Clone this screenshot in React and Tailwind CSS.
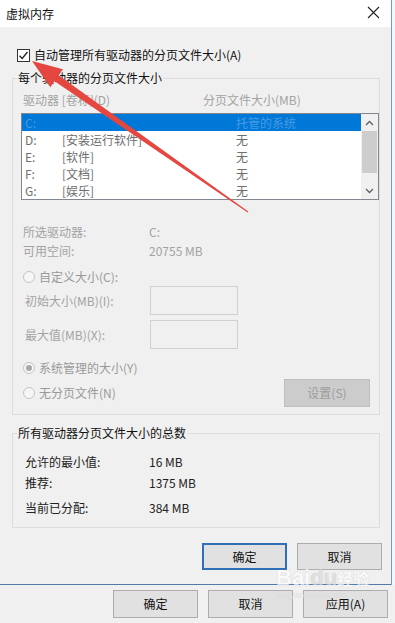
import React from "react";

const F = { fontFamily: '"Noto Sans CJK SC", "Noto Sans", sans-serif' };

function Radio({ checked }) {
  return (
    <span className="w-[12px] h-[12px] rounded-full border border-[#c4c4c4] bg-[#f6f6f6] flex items-center justify-center shrink-0">
      {checked && <span className="w-[6px] h-[6px] rounded-full bg-[#a8a8a8]" />}
    </span>
  );
}

function Btn({ children, primary, disabled, className = "" }) {
  return (
    <div
      className={
        "flex items-center justify-center text-[12px] leading-[14px] " +
        (primary
          ? "border-2 border-[#2f6fb7] bg-[#e1e1e1] text-[#111] "
          : disabled
          ? "border border-[#bfbfbf] bg-[#cccccc] text-[#9c9c9c] "
          : "border border-[#adadad] bg-[#e1e1e1] text-[#111] ") +
        className
      }
    >
      {children}
    </div>
  );
}

const rows = [
  ["D:", "[安装运行软件]", "无"],
  ["E:", "[软件]", "无"],
  ["F:", "[文档]", "无"],
  ["G:", "[娱乐]", "无"],
];

export default function App() {
  return (
    <div className="w-[395px] h-[623px] bg-[#f0f0f0] relative overflow-hidden text-[12px] leading-[14px] text-[#111]" style={F}>
      <div className="flex">
        <div className="w-[392px] border-r border-[#6d9ccf] shrink-0">
          {/* Title bar */}
          <div className="h-[27px] bg-white flex items-center justify-between pl-[6px] pr-[11px]">
            <span className="text-[12px] leading-[14px] text-[#111]">虚拟内存</span>
            <svg width="13" height="13" viewBox="0 0 13 13" className="mt-[-2px]">
              <path d="M1 1 L12 12 M12 1 L1 12" stroke="#222" strokeWidth="1.1" fill="none" />
            </svg>
          </div>
          {/* Body */}
          <div className="h-[558px] bg-[#f0f0f0] border-b border-[#4f7bab] flex flex-col">
            <div className="mt-[21px] ml-[17px] flex items-center h-[14px]">
              <span className="w-[13px] h-[13px] border border-[#333] bg-white flex items-center justify-center shrink-0">
                <svg width="11" height="11" viewBox="0 0 11 11">
                  <path d="M1.5 5.8 L4.2 8.5 L9.5 2" stroke="#222" strokeWidth="1.3" fill="none" />
                </svg>
              </span>
              <span className="ml-[4px]">自动管理所有驱动器的分页文件大小(A)</span>
            </div>

            {/* Group 1 */}
            <fieldset className="mt-[9px] ml-[12px] w-[368px] border border-[#dcdcdc] m-0 p-0 pb-[7px]">
              <legend className="ml-[4px] px-[1px] text-[12px] leading-[14px] text-[#111]">每个驱动器的分页文件大小</legend>
              <div className="mt-[8px] flex h-[14px] text-[#a3a3a3]">
                <span className="ml-[10px] w-[180px]">驱动器 [卷标](D)</span>
                <span>分页文件大小(MB)</span>
              </div>
              <div className="mt-[6px] ml-[8px] w-[358px] h-[87px] border border-[#828790] bg-white flex">
                <div className="flex-1 flex flex-col">
                  <div className="h-[17px] bg-[#0078d7] flex items-center text-[#4a9ae2]">
                    <span className="ml-[3px] w-[211px]">C:</span>
                    <span>托管的系统</span>
                  </div>
                  {rows.map((r) => (
                    <div key={r[0]} className="h-[17px] flex items-center text-[#6e6e6e]">
                      <span className="ml-[3px] w-[37px]">{r[0]}</span>
                      <span className="w-[174px]">{r[1]}</span>
                      <span>{r[2]}</span>
                    </div>
                  ))}
                </div>
                <div className="w-[17px] bg-[#f0f0f0] flex flex-col items-center">
                  <div className="h-[17px] flex items-center justify-center">
                    <svg width="9" height="6" viewBox="0 0 9 6"><path d="M1 5 L4.5 1.5 L8 5" stroke="#606060" strokeWidth="1.3" fill="none" /></svg>
                  </div>
                  <div className="w-[15px] h-[42px] bg-[#cdcdcd]" />
                  <div className="flex-1" />
                  <div className="h-[17px] flex items-center justify-center">
                    <svg width="9" height="6" viewBox="0 0 9 6"><path d="M1 1 L4.5 4.5 L8 1" stroke="#606060" strokeWidth="1.3" fill="none" /></svg>
                  </div>
                </div>
              </div>

              <div className="mt-[25px] flex h-[14px] text-[#a3a3a3]">
                <span className="ml-[10px] w-[126px]">所选驱动器:</span>
                <span>C:</span>
              </div>
              <div className="mt-[5px] flex h-[14px] text-[#a3a3a3]">
                <span className="ml-[10px] w-[126px]">可用空间:</span>
                <span>20755 MB</span>
              </div>

              <div className="mt-[12px] ml-[10px] flex items-center h-[14px] text-[#9a9a9a]">
                <Radio />
                <span className="ml-[4px]">自定义大小(C):</span>
              </div>
              <div className="mt-[2px] flex items-center h-[29px] text-[#a3a3a3]">
                <span className="ml-[12px] w-[125px]">初始大小(MB)(I):</span>
                <div className="w-[88px] h-[29px] border border-[#d0d0d0] bg-[#f0f0f0]" />
              </div>
              <div className="mt-[5px] flex items-center h-[29px] text-[#a3a3a3]">
                <span className="ml-[12px] w-[125px]">最大值(MB)(X):</span>
                <div className="w-[88px] h-[29px] border border-[#d0d0d0] bg-[#f0f0f0]" />
              </div>
              <div className="mt-[12px] ml-[10px] flex items-center h-[14px] text-[#9a9a9a]">
                <Radio checked />
                <span className="ml-[4px]">系统管理的大小(Y)</span>
              </div>
              <div className="mt-[4px] ml-[10px] flex items-center h-[28px] text-[#9a9a9a]">
                <Radio />
                <span className="ml-[4px] w-[245px]">无分页文件(N)</span>
                <Btn disabled className="w-[86px] h-[28px]">设置(S)</Btn>
              </div>
            </fieldset>

            {/* Group 2 */}
            <fieldset className="mt-[11px] ml-[12px] w-[368px] border border-[#dcdcdc] m-0 p-0 pb-[12px]">
              <legend className="ml-[4px] px-[1px] text-[12px] leading-[14px] text-[#111]">所有驱动器分页文件大小的总数</legend>
              <div className="mt-[15px] flex h-[14px] text-[#222]">
                <span className="ml-[12px] w-[124px]">允许的最小值:</span>
                <span>16 MB</span>
              </div>
              <div className="mt-[7px] flex h-[14px] text-[#222]">
                <span className="ml-[12px] w-[124px]">推荐:</span>
                <span>1375 MB</span>
              </div>
              <div className="mt-[11px] flex h-[14px] text-[#222]">
                <span className="ml-[12px] w-[124px]">当前已分配:</span>
                <span>384 MB</span>
              </div>
            </fieldset>

            <div className="mt-[15px] flex justify-end gap-[10px] pr-[9px]">
              <Btn primary className="w-[85px] h-[27px]">确定</Btn>
              <Btn className="w-[85px] h-[27px]">取消</Btn>
            </div>
          </div>
        </div>
        <div className="flex-1 bg-[#f4f7fa]" />
      </div>

      {/* Outer buttons */}
      <div className="mt-[5px] flex gap-[10px] pl-[113px]">
        <Btn className="w-[85px] h-[28px]">确定</Btn>
        <Btn className="w-[85px] h-[28px]">取消</Btn>
        <Btn className="w-[85px] h-[28px]">应用(A)</Btn>
      </div>

      {/* Watermark */}
      <div className="absolute left-[276px] top-[566px] pointer-events-none flex flex-col items-start opacity-70">
        <span className="text-[22px] leading-[24px] font-bold text-white" style={{ fontFamily: '"Liberation Sans", sans-serif', textShadow: "0 0 1px #b8b8b8" }}>
          Bai<span className="text-[#d8d8d8]">du</span><span className="text-[16px]" style={F}>经验</span>
        </span>
        <span className="text-[9px] leading-[10px] text-[#dcdcdc]" style={{ fontFamily: '"Liberation Sans", sans-serif' }}>jingyan.baidu.com</span>
      </div>

      {/* Red annotation arrow */}
      <svg className="absolute left-0 top-0 pointer-events-none" width="395" height="623" viewBox="0 0 395 623">
        <polygon points="54.6,81.2 58.6,75.2 248.3,211.5 247.7,212.5" fill="#e5463f" />
        <polygon points="32,61 62.9,69.2 50.3,87.2" fill="#e5463f" />
      </svg>
    </div>
  );
}
